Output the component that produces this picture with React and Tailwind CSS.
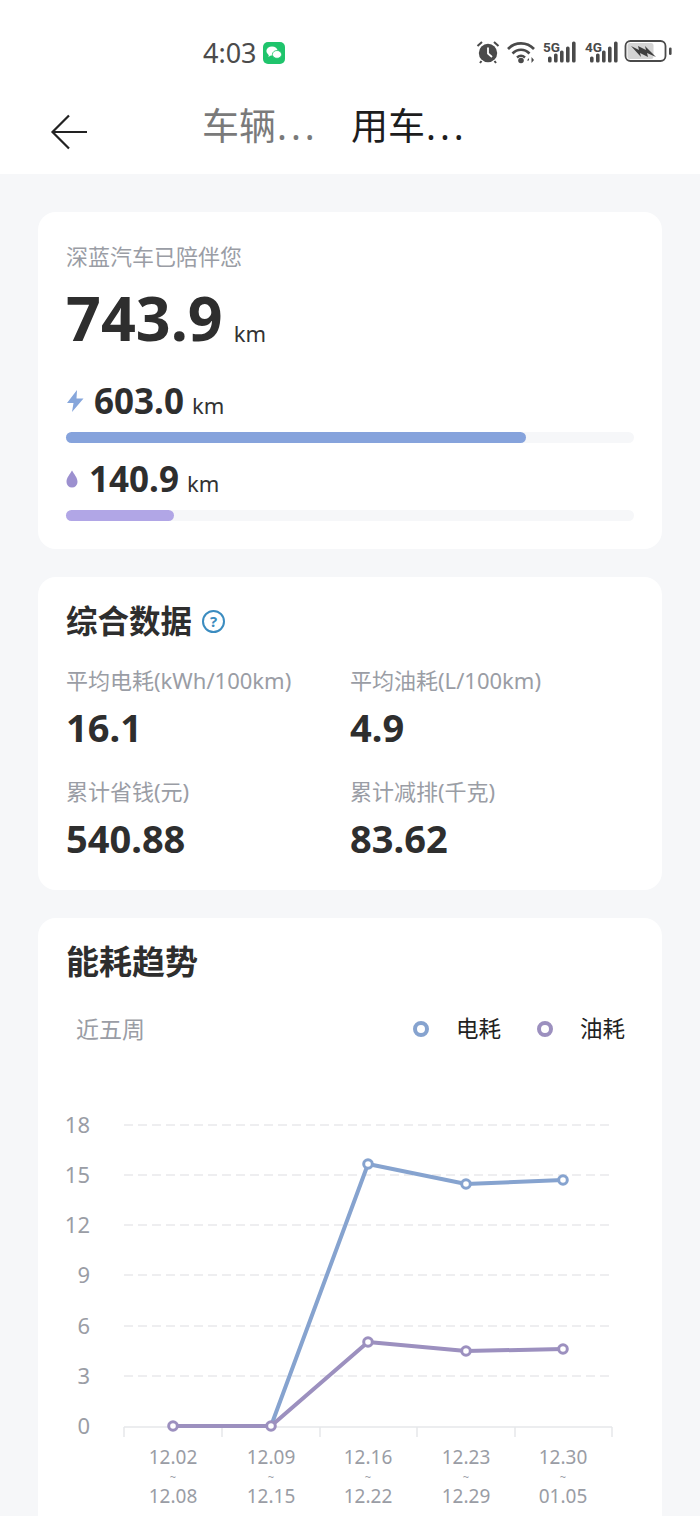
const cjk = { fontFamily: '"Noto Sans", "Noto Sans CJK SC", sans-serif' }

const ticks = [124, 222, 320, 417, 515, 612]
const gridLines = [
  { label: "18", y: 1125 },
  { label: "15", y: 1175 },
  { label: "12", y: 1225 },
  { label: "9", y: 1275 },
  { label: "6", y: 1326 },
  { label: "3", y: 1376 },
]
const weeks = [
  { x: 173, from: "12.02", to: "12.08", ev: 1426, oil: 1426 },
  { x: 271, from: "12.09", to: "12.15", ev: 1426, oil: 1426 },
  { x: 368, from: "12.16", to: "12.22", ev: 1164, oil: 1342 },
  { x: 466, from: "12.23", to: "12.29", ev: 1184, oil: 1351 },
  { x: 563, from: "12.30", to: "01.05", ev: 1180, oil: 1349 },
]
const signalBars = [
  { x: 5, h: 6 },
  { x: 11, h: 9 },
  { x: 17, h: 12 },
  { x: 23, h: 16 },
  { x: 29, h: 21 },
]

function Chart() {
  return (
    <svg width="624" height="416" viewBox="38 1100 624 416" className="block" style={cjk}>
      {gridLines.map((g) => (
        <g key={g.label}>
          <line x1="124" x2="612" y1={g.y} y2={g.y} stroke="#e9e9ec" strokeWidth="1.5" strokeDasharray="9 5" />
          <text x="90" y={g.y + 8} textAnchor="end" fontSize="22" fill="#9a9da5">{g.label}</text>
        </g>
      ))}
      <text x="90" y="1434" textAnchor="end" fontSize="22" fill="#9a9da5">0</text>
      <line x1="124" x2="612" y1="1427" y2="1427" stroke="#e6e7ea" strokeWidth="1.5" />
      {ticks.map((x) => (
        <line key={x} x1={x} x2={x} y1="1427" y2="1437" stroke="#e6e7ea" strokeWidth="1.5" />
      ))}
      {weeks.map((w) => (
        <g key={w.x} textAnchor="middle" fill="#9a9da5">
          <text x={w.x} y="1464" fontSize="19">{w.from}</text>
          <text x={w.x} y="1481" fontSize="11">~</text>
          <text x={w.x} y="1503" fontSize="19">{w.to}</text>
        </g>
      ))}
      <polyline points={weeks.map((w) => `${w.x},${w.ev}`).join(" ")} fill="none" stroke="#86a3cf" strokeWidth="4" strokeLinejoin="round" />
      <polyline points={weeks.map((w) => `${w.x},${w.oil}`).join(" ")} fill="none" stroke="#9c90bf" strokeWidth="4" strokeLinejoin="round" />
      {weeks.slice(2).map((w) => (
        <circle key={w.x} cx={w.x} cy={w.ev} r="4.3" fill="#fff" stroke="#86a3cf" strokeWidth="3" />
      ))}
      {weeks.map((w) => (
        <circle key={w.x} cx={w.x} cy={w.oil} r="4.3" fill="#fff" stroke="#9c90bf" strokeWidth="3" />
      ))}
    </svg>
  )
}

function Signal({ label }) {
  return (
    <svg width="34" height="24" viewBox="0 0 34 24" className="block overflow-visible" fill="#4a4a4a">
      <text x="0" y="11.5" fontSize="13.5" fontWeight="700" fontFamily="Roboto, sans-serif">{label}</text>
      {signalBars.map((b) => (
        <rect key={b.x} x={b.x} y={22.5 - b.h} width="3.6" height={b.h} rx="1.6" />
      ))}
    </svg>
  )
}

function StatusBar() {
  return (
    <div className="flex h-[89px] items-start pt-[38px]">
      <div className="ml-[203px] flex items-center gap-[6px]">
        <span className="text-[27px] leading-[30px] text-[#4b4b4b]" style={cjk}>4:03</span>
        <div className="flex h-[22px] w-[22px] items-center justify-center rounded-[5px] bg-[#1fc46c]">
          <svg width="16" height="14" viewBox="0 0 16 14" fill="#fff">
            <ellipse cx="6" cy="5" rx="5.6" ry="4.6" />
            <ellipse cx="11" cy="8.4" rx="4.6" ry="3.9" stroke="#1fc46c" strokeWidth="0.8" />
            <path d="M3 8 L2.4 11 L5.4 9 Z" />
          </svg>
        </div>
      </div>
      <div className="ml-auto mr-[28px] mt-[2px] flex items-center">
        <svg width="24" height="24" viewBox="0 0 24 24" fill="none" className="block">
          <circle cx="12" cy="13" r="9.2" fill="#4a4a4a" />
          <path d="M12 7.5 V13.5 L16 17" stroke="#fff" strokeWidth="1.8" fill="none" />
          <path d="M1.5 6 L6 2 M22.5 6 L18 2 M5.5 21 L4 23 M18.5 21 L20 23" stroke="#4a4a4a" strokeWidth="2" />
        </svg>
        <svg width="30" height="24" viewBox="0 0 30 24" fill="none" className="ml-[7px] block">
          <path d="M1 9 C8 1.5 20 1.5 27 9" stroke="#4a4a4a" strokeWidth="2.6" />
          <path d="M5.5 13.5 C10.5 8.5 17.5 8.5 22.5 13.5" stroke="#4a4a4a" strokeWidth="2.6" />
          <path d="M10 17.5 C12.5 15.2 15.5 15.2 18 17.5" stroke="#4a4a4a" strokeWidth="2.4" />
          <circle cx="14" cy="20.5" r="2.8" fill="#4a4a4a" />
          <path d="M22 18 L19.8 20.5 H22 Z M24.5 17 V23 L27 20 Z" fill="#4a4a4a" />
        </svg>
        <span className="ml-[6px] block"><Signal label="5G" /></span>
        <span className="ml-[8px] block"><Signal label="4G" /></span>
        <svg width="48" height="24" viewBox="0 0 48 24" fill="none" className="ml-[5px] block">
          <rect x="1.5" y="1" width="40" height="20" rx="5" stroke="#4a4a4a" strokeWidth="1.8" />
          <rect x="3.5" y="3" width="26" height="16" rx="2.5" fill="#d4d4d4" />
          <rect x="45" y="7.5" width="2.6" height="7.5" rx="1.3" fill="#4a4a4a" />
          <path d="M7 6 L15 10 L14 6 L22 10 L21 6 L32 17 L23 13 L24 17 L16 13 L17 17 Z" fill="#3f3f3f" />
        </svg>
      </div>
    </div>
  )
}

function Header() {
  return (
    <header className="h-[174px] bg-white">
      <StatusBar />
      <div className="flex items-start">
        <svg width="38" height="38" viewBox="0 0 38 38" fill="none" className="ml-[50px] mt-[24px] block">
          <path d="M37 19 H3 M19 2.5 L2.5 19 L19 35.5" stroke="#222" strokeWidth="2.2" />
        </svg>
        <div className="ml-[114px] mt-[13px] w-[112px] whitespace-nowrap text-[37px] leading-[48px] text-[#7a7a7a]" style={cjk}>
          车辆<span className="ml-[1px] tracking-[4px]">...</span>
        </div>
        <div className="ml-[37px] mt-[13px] whitespace-nowrap text-[37px] leading-[48px] text-[#1d1d1d]" style={cjk}>
          用车<span className="ml-[1px] tracking-[4px]">...</span>
        </div>
      </div>
    </header>
  )
}

function Mileage({ icon, value, bar, barClass, iconGap }) {
  return (
    <div>
      <div className="flex h-[38px] items-center">
        <span className={`block ${iconGap}`}>{icon}</span>
        <span className="text-[35px] font-bold leading-[38px] text-[#2e2e2e]" style={cjk}>{value}</span>
        <span className="ml-[8px] mt-[8px] text-[22px] leading-[30px] text-[#333]" style={cjk}>km</span>
      </div>
      <div className="mt-[12px] h-[11px] rounded-full bg-[#f6f7f9]">
        <div className={`h-full rounded-full ${barClass}`} style={{ width: bar }} />
      </div>
    </div>
  )
}

function Stat({ label, value }) {
  return (
    <div>
      <p className="text-[22px] leading-[30px] text-[#9a9da5]" style={cjk}>{label}</p>
      <p className="mt-[10px] text-[38px] font-bold leading-[44px] text-[#2e2e2e]" style={cjk}>{value}</p>
    </div>
  )
}

function LegendDot({ color, label }) {
  return (
    <div className="flex items-center">
      <span className={`h-[16px] w-[16px] rounded-full border-[4px] bg-white ${color}`} />
      <span className="ml-[27px] text-[22.5px] leading-[30px] text-[#222]" style={cjk}>{label}</span>
    </div>
  )
}

export default function App() {
  return (
    <div className="h-[1516px] w-[700px] overflow-hidden bg-[#f6f7f9]">
      <Header />
      <main className="flex flex-col gap-[28px] px-[38px] pt-[38px]">
        <section className="h-[337px] rounded-[18px] bg-white px-[28px] pt-[29px]">
          <p className="text-[22px] leading-[30px] text-[#9a9da5]" style={cjk}>深蓝汽车已陪伴您</p>
          <div className="mt-[12px] flex h-[70px] items-center">
            <span className="text-[61px] font-bold leading-[70px] text-[#2e2e2e]" style={cjk}>743.9</span>
            <span className="ml-[11px] mt-[30px] text-[22px] leading-[30px] text-[#333]" style={cjk}>km</span>
          </div>
          <div className="mt-[29px] flex flex-col gap-[17px]">
            <Mileage
              value="603.0"
              bar="81%"
              barClass="bg-[#86a3dc]"
              iconGap="mr-[9px]"
              icon={
                <svg width="19" height="24" viewBox="0 0 19 24" className="block">
                  <path d="M11 1 L1 14 H7.5 L6 23 L17.5 9.5 H10.5 Z" fill="#86a6db" />
                </svg>
              }
            />
            <Mileage
              value="140.9"
              bar="19%"
              barClass="bg-[#b1a6e6]"
              iconGap="mr-[11px]"
              icon={
                <svg width="12" height="18" viewBox="0 0 12 18" className="block">
                  <path d="M6 0.5 C8 4 11.5 7.5 11.5 12 A5.5 5.5 0 0 1 0.5 12 C0.5 7.5 4 4 6 0.5 Z" fill="#9c90cf" />
                </svg>
              }
            />
          </div>
        </section>

        <section className="h-[313px] rounded-[18px] bg-white px-[28px] pt-[24px]">
          <div className="flex h-[40px] items-center gap-[10px]">
            <h2 className="text-[31.5px] font-bold leading-[40px] text-[#2e2e2e]" style={cjk}>综合数据</h2>
            <span className="flex h-[23px] w-[23px] items-center justify-center rounded-full border-2 border-[#3b8cc0] text-[15px] font-bold leading-none text-[#3b8cc0]" style={cjk}>?</span>
          </div>
          <div className="mt-[24px] grid grid-cols-[284px_1fr] gap-y-[27px]">
            <Stat label="平均电耗(kWh/100km)" value="16.1" />
            <Stat label="平均油耗(L/100km)" value="4.9" />
            <Stat label="累计省钱(元)" value="540.88" />
            <Stat label="累计减排(千克)" value="83.62" />
          </div>
        </section>

        <section className="rounded-t-[18px] bg-white pt-[24px]">
          <h2 className="px-[28px] text-[33px] font-bold leading-[40px] text-[#2e2e2e]" style={cjk}>能耗趋势</h2>
          <div className="mt-[32px] flex h-[30px] items-center pl-[38px] pr-[37px]">
            <span className="text-[23px] leading-[30px] text-[#9a9da5]" style={cjk}>近五周</span>
            <div className="ml-auto flex gap-[36px]">
              <LegendDot color="border-[#86a3cf]" label="电耗" />
              <LegendDot color="border-[#9c90bf]" label="油耗" />
            </div>
          </div>
          <div className="mt-[56px]">
            <Chart />
          </div>
        </section>
      </main>
    </div>
  )
}
